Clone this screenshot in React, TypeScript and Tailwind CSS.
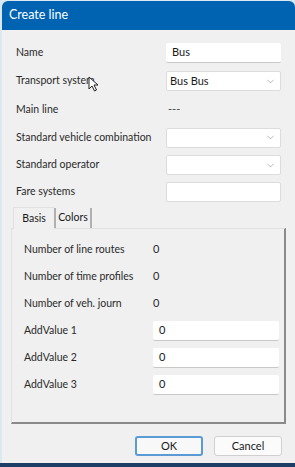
import { ChevronDown } from "lucide-react";

const font = { fontFamily: 'Lato, "Liberation Sans", Arial, sans-serif' };

const TextBox = ({ value, width = "w-[115px]" }: { value?: string; width?: string }) => (
  <div className={`${width} h-[20px] bg-white border-b border-[#c8c8c8] rounded-[2px] flex items-center px-[6px] text-[11px] text-[#1a1a1a]`}>
    {value}
  </div>
);

const Select = ({ value }: { value?: string }) => (
  <div className="w-[115px] h-[20px] bg-white border border-[#dcdcdc] rounded-[2px] flex items-center justify-between pl-[3px] pr-[4px] text-[11px] text-[#1a1a1a]">
    <span>{value}</span>
    <ChevronDown size={11} strokeWidth={1.2} className="text-[#7a7a7a]" />
  </div>
);

const Row = ({ label, children, h = "h-[28px]" }: { label: string; children: React.ReactNode; h?: string }) => (
  <div className={`flex items-center ${h}`}>
    <div className="w-[150px] whitespace-nowrap text-[10.5px] text-[#2a2a2a]">{label}</div>
    {children}
  </div>
);

const PanelRow = ({ label, children }: { label: string; children: React.ReactNode }) => (
  <div className="flex items-center h-[27px]">
    <div className="w-[129px] whitespace-nowrap text-[10.5px] text-[#2a2a2a]">{label}</div>
    {children}
  </div>
);

// mouse pointer sitting over "Transport system"
const Cursor = () => (
  <svg className="absolute left-[88px] top-[76px]" width="11" height="16" viewBox="0 0 11 16">
    <path d="M1 1 L1 13 L4 10 L6.5 15 L8.5 14 L6 9 L10 9 Z" fill="#fff" stroke="#222" strokeWidth="1" strokeLinejoin="round" />
  </svg>
);

export default function App() {
  return (
    <div className="relative w-[295px] h-[467px] bg-[#dbe7f3] flex flex-col" style={font}>
      <div className="ml-[2px] mt-[1px] flex-1 flex flex-col rounded-t-[6px] overflow-hidden bg-[#f0f0f0]">
        <div className="h-[29px] bg-[#0063b1] flex items-center pl-[7px] text-[12.5px] text-white">
          Create line
        </div>
        <div className="pl-[14px] pr-[13px] pt-[9px]">
          <Row label="Name">
            <TextBox value="Bus" />
          </Row>
          <Row label="Transport system">
            <Select value="Bus Bus" />
          </Row>
          <Row label="Main line" h="h-[29px]">
            <span className="text-[11px] text-[#444] pl-[2px]">---</span>
          </Row>
          <Row label="Standard vehicle combination" h="h-[27px]">
            <Select />
          </Row>
          <Row label="Standard operator">
            <Select />
          </Row>
          <Row label="Fare systems" h="h-[26px]">
            <div className="w-[115px] h-[20px] bg-white border border-[#dcdcdc] rounded-[2px]" />
          </Row>
        </div>
        <div className="mx-[9px] mt-[1px]">
          <div className="flex items-end h-[22px] text-[10.5px] text-[#1a1a1a]">
            <div className="h-[22px] w-[41px] border-t border-l border-[#e0e0e0] bg-[#f0f0f0] flex items-center justify-center ml-[2px] relative z-10 -mb-px">
              Basis
            </div>
            <div className="h-[20px] w-[38px] border-l-2 border-r-2 border-[#b0b0b0] flex items-center justify-center">
              Colors
            </div>
          </div>
          <div className="h-[196px] border-t border-l border-[#e0e0e0] border-r-2 border-b-2 border-r-[#8a8a8a] border-b-[#8a8a8a] pl-[12px] pt-[7px]">
            <PanelRow label="Number of line routes">
              <span className="text-[11px] text-[#2a2a2a]">0</span>
            </PanelRow>
            <PanelRow label="Number of time profiles">
              <span className="text-[11px] text-[#2a2a2a]">0</span>
            </PanelRow>
            <PanelRow label="Number of veh. journ">
              <span className="text-[11px] text-[#2a2a2a]">0</span>
            </PanelRow>
            <PanelRow label="AddValue 1">
              <TextBox value="0" width="w-[126px]" />
            </PanelRow>
            <PanelRow label="AddValue 2">
              <TextBox value="0" width="w-[126px]" />
            </PanelRow>
            <PanelRow label="AddValue 3">
              <TextBox value="0" width="w-[126px]" />
            </PanelRow>
          </div>
        </div>
        <div className="flex justify-end gap-[11px] pr-[13px] mt-[12px]">
          <button className="w-[68px] h-[20px] rounded-[3px] border-2 border-[#5a9bd5] bg-[#f8f8f8] text-[11px] text-[#1a1a1a]">
            OK
          </button>
          <button className="w-[68px] h-[20px] rounded-[3px] border border-[#d0d0d0] bg-[#fbfbfb] text-[11px] text-[#1a1a1a]">
            Cancel
          </button>
        </div>
      </div>
      <div className="h-[4px] bg-[#1d3c66]" />
      <Cursor />
    </div>
  );
}
